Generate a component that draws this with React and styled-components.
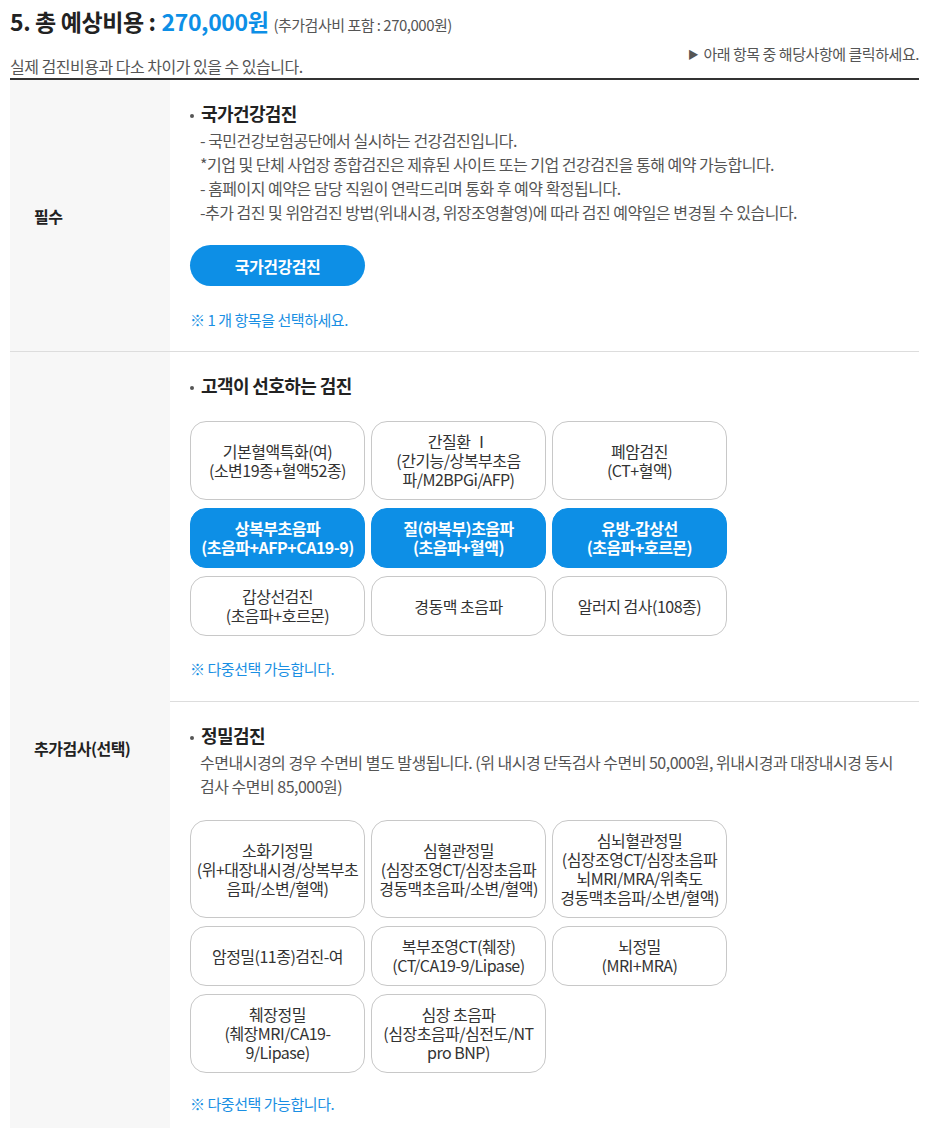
import React from "react";
import styled, { createGlobalStyle } from "styled-components";

const GlobalStyle = createGlobalStyle`
  html, body { margin: 0; padding: 0; background: #fff; }
  body {
    font-family: "Noto Sans CJK KR", "Noto Sans", sans-serif;
    color: #333;
    -webkit-font-smoothing: antialiased;
  }
  * { box-sizing: border-box; }
`;

const Page = styled.div`
  padding: 6px 31px 40px 10px;
  width: 950px;
`;

const Header = styled.div`
  display: flex;
  justify-content: space-between;
  align-items: flex-end;
  padding-bottom: 1px;
`;

const HeaderLeft = styled.div`
  display: flex;
  flex-direction: column;
`;

const Title = styled.h2`
  margin: 0;
  display: flex;
  align-items: baseline;
  height: 30px;
  font-size: 23px;
  line-height: 30px;
  font-weight: 700;
  color: #222;
  letter-spacing: -0.4px;
  white-space: nowrap;
`;

const Price = styled.span`
  color: #0d8fe6;
  margin-left: 6px;
`;

const PriceNote = styled.span`
  font-size: 15px;
  line-height: 1;
  font-weight: 400;
  color: #555;
  letter-spacing: -0.5px;
  margin-left: 5px;
`;

const Subtitle = styled.p`
  margin: 19px 0 0;
  font-size: 16px;
  line-height: 22px;
  color: #555;
  letter-spacing: -0.5px;
`;

const Notice = styled.p`
  margin: 0 0 13px;
  font-size: 15px;
  line-height: 20px;
  color: #555;
  letter-spacing: -0.45px;
`;

const Arrow = styled.span`
  font-size: 11px;
  margin-right: 5px;
  vertical-align: 1px;
`;

const Table = styled.div`
  border-top: 2px solid #333;
`;

const Row = styled.div`
  display: grid;
  grid-template-columns: 160px 1fr;
  border-bottom: 1px solid #ddd;
`;

const Label = styled.div`
  background: #f7f7f7;
  display: flex;
  align-items: center;
  padding-left: 24px;
  font-size: 16px;
  font-weight: 700;
  color: #222;
  letter-spacing: -0.5px;
`;

const Cell = styled.div`
  display: flex;
  flex-direction: column;
`;

const Section = styled.div`
  padding: 21px 20px ${(p) => p.$pb || 21}px;
  & + & {
    border-top: 1px solid #ddd;
  }
`;

const Heading = styled.h3`
  margin: 0;
  font-size: 18px;
  line-height: 24px;
  font-weight: 700;
  color: #222;
  letter-spacing: -0.6px;
  display: flex;
  align-items: center;
`;

const Dot = styled.span`
  width: 4px;
  height: 4px;
  border-radius: 50%;
  background: #555;
  margin-right: 7px;
  margin-top: 5px;
  flex: none;
`;

const Desc = styled.div`
  margin-top: 3px;
  padding-left: 10px;
  font-size: 16px;
  line-height: 24px;
  color: #555;
  letter-spacing: -0.5px;
  word-break: keep-all;
`;

const Line = styled.div``;

const MainButton = styled.button`
  margin-top: 21px;
  width: 175px;
  height: 41px;
  border: none;
  border-radius: 21px;
  background: #0d8fe6;
  color: #fff;
  font-family: inherit;
  font-size: 16px;
  font-weight: 700;
  letter-spacing: -0.5px;
  cursor: pointer;
`;

const Note = styled.p`
  margin: ${(p) => p.$mt || 24}px 0 0;
  font-size: 15px;
  line-height: 20px;
  color: #1a8fe3;
  letter-spacing: -0.45px;
`;

const Grid = styled.div`
  margin-top: ${(p) => p.$mt || 24}px;
  display: grid;
  grid-template-columns: repeat(3, 175px);
  column-gap: 6px;
  row-gap: 8px;
`;

const Option = styled.button`
  border: 1px solid ${(p) => (p.$active ? "#0d8fe6" : "#c8c8c8")};
  background: ${(p) => (p.$active ? "#0d8fe6" : "#fff")};
  color: ${(p) => (p.$active ? "#fff" : "#333")};
  font-weight: ${(p) => (p.$active ? 700 : 400)};
  border-radius: 16px;
  padding: 10px 4px;
  min-height: 60px;
  font-family: inherit;
  font-size: 16px;
  line-height: 19px;
  letter-spacing: -0.5px;
  white-space: nowrap;
  text-align: center;
  display: flex;
  align-items: center;
  justify-content: center;
  cursor: pointer;
`;

const preferred = [
  { t: ["기본혈액특화(여)", "(소변19종+혈액52종)"] },
  { t: ["간질환 Ⅰ", "(간기능/상복부초음", "파/M2BPGi/AFP)"] },
  { t: ["폐암검진", "(CT+혈액)"] },
  { t: ["상복부초음파", "(초음파+AFP+CA19-9)"], a: true },
  { t: ["질(하복부)초음파", "(초음파+혈액)"], a: true },
  { t: ["유방-갑상선", "(초음파+호르몬)"], a: true },
  { t: ["갑상선검진", "(초음파+호르몬)"] },
  { t: ["경동맥 초음파"] },
  { t: ["알러지 검사(108종)"] },
];

const precise = [
  { t: ["소화기정밀", "(위+대장내시경/상복부초", "음파/소변/혈액)"] },
  { t: ["심혈관정밀", "(심장조영CT/심장초음파", "경동맥초음파/소변/혈액)"] },
  { t: ["심뇌혈관정밀", "(심장조영CT/심장초음파", "뇌MRI/MRA/위축도", "경동맥초음파/소변/혈액)"] },
  { t: ["암정밀(11종)검진-여"] },
  { t: ["복부조영CT(췌장)", "(CT/CA19-9/Lipase)"] },
  { t: ["뇌정밀", "(MRI+MRA)"] },
  { t: ["췌장정밀", "(췌장MRI/CA19-", "9/Lipase)"] },
  { t: ["심장 초음파", "(심장초음파/심전도/NT", "pro BNP)"] },
];

const OptionText = ({ lines }) => (
  <span>
    {lines.map((l, i) => (
      <React.Fragment key={i}>
        {i > 0 && <br />}
        {l}
      </React.Fragment>
    ))}
  </span>
);

export default function App() {
  return (
    <>
      <GlobalStyle />
      <Page>
        <Header>
          <HeaderLeft>
            <Title>
              5. 총 예상비용 :<Price>270,000원</Price>
              <PriceNote>(추가검사비 포함 : 270,000원)</PriceNote>
            </Title>
            <Subtitle>실제 검진비용과 다소 차이가 있을 수 있습니다.</Subtitle>
          </HeaderLeft>
          <Notice>
            <Arrow>▶</Arrow>아래 항목 중 해당사항에 클릭하세요.
          </Notice>
        </Header>
        <Table>
          <Row>
            <Label>필수</Label>
            <Cell>
              <Section $pb={21}>
                <Heading>
                  <Dot />
                  국가건강검진
                </Heading>
                <Desc>
                  <Line>- 국민건강보험공단에서 실시하는 건강검진입니다.</Line>
                  <Line>
                    *기업 및 단체 사업장 종합검진은 제휴된 사이트 또는 기업 건강검진을 통해 예약 가능합니다.
                  </Line>
                  <Line>- 홈페이지 예약은 담당 직원이 연락드리며 통화 후 예약 확정됩니다.</Line>
                  <Line>
                    -추가 검진 및 위암검진 방법(위내시경, 위장조영촬영)에 따라 검진 예약일은 변경될 수 있습니다.
                  </Line>
                </Desc>
                <div>
                  <MainButton>국가건강검진</MainButton>
                </div>
                <Note $mt={24}>※ 1 개 항목을 선택하세요.</Note>
              </Section>
            </Cell>
          </Row>
          <Row>
            <Label>추가검사(선택)</Label>
            <Cell>
              <Section $pb={22}>
                <Heading>
                  <Dot />
                  고객이 선호하는 검진
                </Heading>
                <Grid $mt={24}>
                  {preferred.map((o, i) => (
                    <Option key={i} $active={o.a}>
                      <OptionText lines={o.t} />
                    </Option>
                  ))}
                </Grid>
                <Note $mt={23}>※ 다중선택 가능합니다.</Note>
              </Section>
              <Section $pb={30}>
                <Heading>
                  <Dot />
                  정밀검진
                </Heading>
                <Desc>
                  수면내시경의 경우 수면비 별도 발생됩니다. (위 내시경 단독검사 수면비 50,000원, 위내시경과 대장내시경 동시 검사 수면비 85,000원)
                </Desc>
                <Grid $mt={22}>
                  {precise.map((o, i) => (
                    <Option key={i}>
                      <OptionText lines={o.t} />
                    </Option>
                  ))}
                </Grid>
                <Note $mt={21}>※ 다중선택 가능합니다.</Note>
              </Section>
            </Cell>
          </Row>
        </Table>
      </Page>
    </>
  );
}
